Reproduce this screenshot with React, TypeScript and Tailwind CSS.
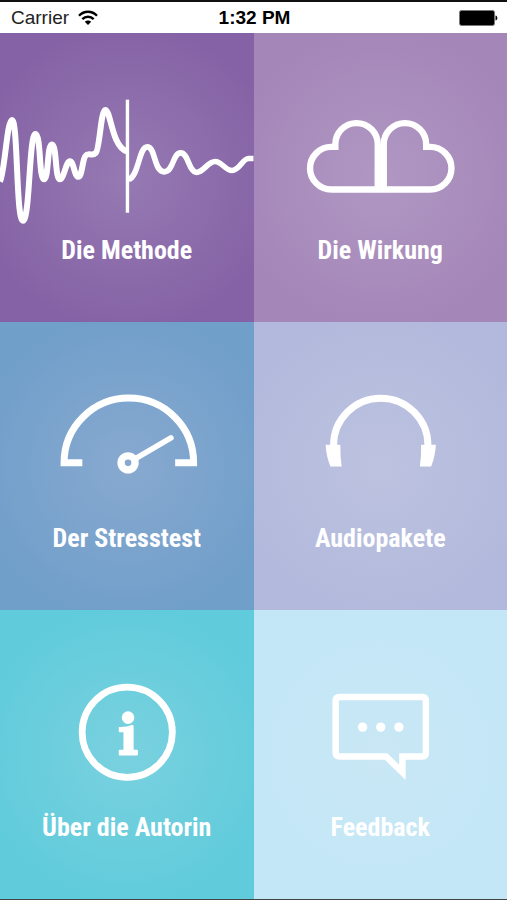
import type { ReactNode } from "react";

type TileProps = {
  label: string;
  background: string;
  children: ReactNode;
};

function Tile({ label, background, children }: TileProps) {
  return (
    <button
      type="button"
      className={`flex min-w-0 flex-col items-center pt-[60px] text-white ${background}`}
    >
      <svg
        viewBox="0 0 254 144"
        className="h-auto w-full"
        fill="none"
        stroke="currentColor"
        aria-hidden="true"
      >
        {children}
      </svg>
      <span className="text-[26px] leading-[26px] font-bold whitespace-nowrap">{label}</span>
    </button>
  );
}

function StatusBar() {
  return (
    <header className="grid h-[31px] grid-cols-3 items-center bg-white pr-[9px] pl-[11px] font-['Liberation_Sans',Arial,sans-serif] text-[19px] leading-[24px] text-black">
      <div className="flex items-center gap-[9px]">
        <span className="text-[#222]">Carrier</span>
        <svg viewBox="0 0 20 16" className="h-[16px] w-[20px]" fill="none" stroke="#000" aria-hidden="true">
          <path d="M1 5.7C6 .4 14 .4 19 5.7" strokeWidth="2.4" />
          <path d="M4.3 9.2C7.5 6 12.5 6 15.7 9.2" strokeWidth="2.4" />
          <path d="M10 15L6.8 11.7C8.6 10 11.4 10 13.2 11.7Z" fill="#000" stroke="none" />
        </svg>
      </div>
      <span className="text-center font-bold whitespace-nowrap">1:32 PM</span>
      <svg viewBox="0 0 39 16" className="h-[16px] w-[39px] justify-self-end" aria-label="Battery full">
        <rect x="0.5" y="0.5" width="35" height="15" rx="2" fill="#000" stroke="#777" />
        <path d="M36.5 5.5C39 6 39 10 36.5 10.5Z" fill="#000" />
      </svg>
    </header>
  );
}

export default function App() {
  return (
    <div className="flex min-h-screen flex-col border-t-2 border-b border-t-[#111] border-b-[#444] font-['Liberation_Sans_Narrow','Roboto_Condensed',Roboto,sans-serif]">
      <StatusBar />
      <main className="grid flex-1 grid-cols-2 grid-rows-3">
        <Tile
          label="Die Methode"
          background="bg-[radial-gradient(circle,#967ab3_0%,#8562a5_80%)]"
        >
          <path
            d="M0 88.7C5 78 7 27 12 27C18 27 16 128 23 128C30 128 29 41 35.5 41C41 41 39 86.5 44 86.5C49 86.5 47 51.5 52 51.5C57 51.5 55 86.5 60 86.5C64 86.5 66 68.5 70 68.5C74 68.5 74.5 84 78.5 84C83 84 82 62 88 61.5C92 61 93 63 96 60C100 56 101 17 105.5 17C111 17 112 54 127 58.5"
            strokeWidth="6"
          />
          <path
            d="M129 86.5C139 84 139 54 147.5 54C156 54 154 79 164.5 79C174 79 173 60 181 60C189 60 189 79.5 197 79.5C204 79.5 208 68.7 215.7 68.7C222 68.7 226 77.7 232.5 77.7C240 77.7 243 65.7 249 65.7H254"
            strokeWidth="5.6"
          />
          <path d="M127.7 6.7V120" strokeWidth="3.4" />
        </Tile>

        <Tile
          label="Die Wirkung"
          background="bg-[radial-gradient(circle,#b098c3_0%,#a486b8_80%)]"
        >
          <g strokeWidth="6.4">
            <path d="M124 96.7H77.5A21.35 21.35 0 0 1 77.5 54H81.5V51.4A21.25 21.25 0 0 1 124 51.4Z" />
            <path d="M130 96.7H176.5A21.35 21.35 0 0 0 176.5 54H172.5V51.4A21.25 21.25 0 0 0 130 51.4Z" />
          </g>
        </Tile>

        <Tile
          label="Der Stresstest"
          background="bg-[radial-gradient(circle,#88a9d0_0%,#709fca_80%)]"
        >
          <path d="M82.5 81H64.2A64.9 64.9 0 0 1 194 81H175.5" strokeWidth="7" />
          <circle cx="128.3" cy="81" r="7" strokeWidth="7.4" />
          <path d="M137 76L171.3 56" strokeWidth="5.6" strokeLinecap="round" />
        </Tile>

        <Tile
          label="Audiopakete"
          background="bg-[radial-gradient(circle,#bcc2df_0%,#b3b9dc_80%)]"
        >
          <path d="M79.7 63.6A47.3 47.3 0 0 1 174.3 63.6" strokeWidth="7" />
          <path
            d="M71.8 63H86.5Q86.3 74 87.8 84.7H76.5Q72.2 74 71.8 63ZM182.2 63H167.5Q167.7 74 166.2 84.7H177.5Q181.8 74 182.2 63Z"
            fill="currentColor"
            stroke="none"
          />
        </Tile>

        <Tile
          label="Über die Autorin"
          background="bg-[radial-gradient(circle,#7ad1df_0%,#5fcbdb_80%)]"
        >
          <circle cx="127.5" cy="62.3" r="45.2" strokeWidth="6.8" />
          <g fill="currentColor" stroke="none">
            <circle cx="128.3" cy="47.7" r="6.3" />
            <path d="M119.5 57Q127 57.3 132 55Q133.9 54.5 133.9 56.5V80H137Q138.2 80 138.2 81V84.7Q138.2 85.7 137 85.7H120Q119 85.7 119 84.7V81Q119 80 120 80H123.7V62.5H120Q119 62.5 119 61.5V58Q119 57 119.5 57Z" />
          </g>
        </Tile>

        <Tile
          label="Feedback"
          background="bg-[radial-gradient(circle,#c9e7f5_0%,#c3e7f7_80%)]"
        >
          <path
            d="M86 27H168.5Q172.2 27 172.2 31V82.5Q172.2 86.7 168.5 86.7H148.7V102.5L132.3 86.7H86Q81.8 86.7 81.8 82.5V31Q81.8 27 86 27Z"
            strokeWidth="6.5"
            strokeMiterlimit="10"
          />
          <g fill="currentColor" stroke="none">
            <circle cx="108.8" cy="57.2" r="4.7" />
            <circle cx="127" cy="57.2" r="4.7" />
            <circle cx="145.2" cy="57.2" r="4.7" />
          </g>
        </Tile>
      </main>
    </div>
  );
}
